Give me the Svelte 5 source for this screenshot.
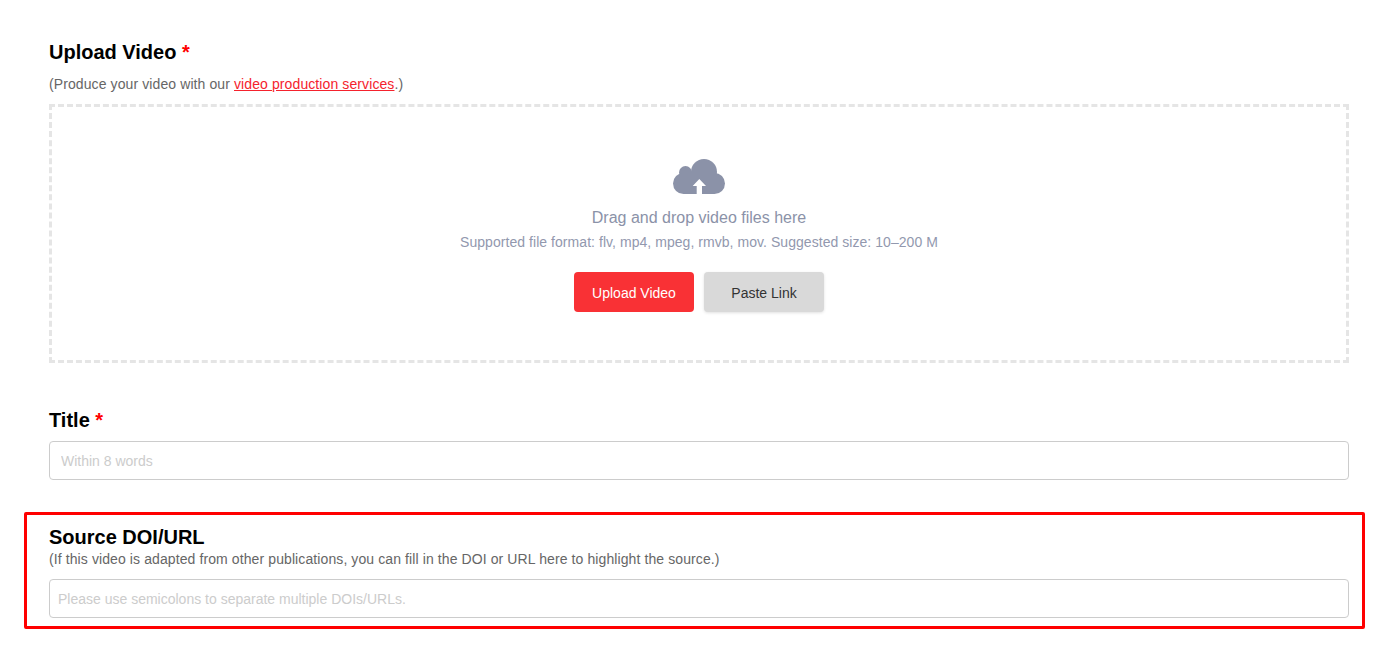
<script>
  let title = "";
  let source = "";
</script>

<div class="page">
  <section class="upload">
    <h2>Upload Video <span class="req">*</span></h2>
    <p class="hint">(Produce your video with our <a href="#services">video production services</a>.)</p>
    <div class="dropzone">
      <svg class="cloud" width="54" height="38" viewBox="0 0 54 38" aria-hidden="true">
        <g fill="#8b92a8">
          <circle cx="32" cy="13" r="13" />
          <circle cx="13.500" cy="13.500" r="6.500" />
          <circle cx="11.500" cy="24.500" r="10.500" />
          <circle cx="42.500" cy="24.500" r="10.500" />
          <rect x="11.500" y="14" width="31" height="21" />
        </g>
        <path fill="#fff" d="M27.300 20 L20.700 27 H24.700 V36 H30 V27 H34Z" />
      </svg>
      <p class="drag">Drag and drop video files here</p>
      <p class="formats">Supported file format: flv, mp4, mpeg, rmvb, mov. Suggested size: 10–200 M</p>
      <div class="actions">
        <button class="btn primary" type="button">Upload Video</button>
        <button class="btn secondary" type="button">Paste Link</button>
      </div>
    </div>
  </section>

  <section class="title-field">
    <h2>Title <span class="req">*</span></h2>
    <input class="title-input" type="text" placeholder="Within 8 words" bind:value={title} />
  </section>

  <section class="source-field">
    <h2>Source DOI/URL</h2>
    <p class="hint">(If this video is adapted from other publications, you can fill in the DOI or URL here to highlight the source.)</p>
    <input type="text" placeholder="Please use semicolons to separate multiple DOIs/URLs." bind:value={source} />
  </section>
</div>

<style>
  :global(body) {
    background: #fff;
    font-family: "Liberation Sans", Arial, sans-serif;
  }

  .page {
    width: 1300px;
    padding: 40px 47px 0 49px;
  }

  h2 {
    margin: 0;
    font-size: 20px;
    line-height: 24px;
    font-weight: 700;
    color: #000;
  }

  .req {
    color: #f00;
  }

  .hint {
    margin: 0;
    font-size: 14px;
    line-height: 20px;
    letter-spacing: 0.1px;
    color: #666;
  }

  .hint a {
    color: #f5222d;
    text-decoration: underline;
  }

  .upload .hint {
    margin-top: 10px;
  }

  .dropzone {
    box-sizing: border-box;
    height: 259px;
    margin-top: 10px;
    padding-top: 52px;
    border: 3px dashed #e5e5e5;
    display: flex;
    flex-direction: column;
    align-items: center;
  }

  .cloud {
    display: block;
  }

  .drag {
    margin: 10px 0 0;
    font-size: 16px;
    line-height: 22px;
    color: #8b92a8;
  }

  .formats {
    margin: 3px 0 0;
    font-size: 14px;
    line-height: 20px;
    letter-spacing: 0.05px;
    color: #9298ae;
  }

  .actions {
    display: flex;
    gap: 10px;
    margin-top: 20px;
  }

  .btn {
    width: 120px;
    height: 40px;
    padding: 2px 0 0;
    border: 0;
    border-radius: 4px;
    font-family: inherit;
    font-size: 14px;
    cursor: pointer;
  }

  .primary {
    background: #f93135;
    color: #fff;
  }

  .secondary {
    background: #d9d9d9;
    color: #333;
    box-shadow: 0 1px 3px rgba(0, 0, 0, 0.12);
  }

  .title-field {
    margin-top: 45px;
  }

  input {
    box-sizing: border-box;
    display: block;
    width: 100%;
    height: 39px;
    padding: 0 8px;
    border: 1px solid #ccc;
    border-radius: 4px;
    background: #fff;
    font-family: inherit;
    font-size: 14px;
    color: #333;
    outline: none;
  }

  input::placeholder {
    color: #ccc;
    opacity: 1;
  }

  .title-input {
    margin-top: 9px;
    padding: 0 11px;
  }

  .source-field {
    margin: 32px -16px 0 -25px;
    padding: 10px 13px 8px 22px;
    border: 3px solid #f00;
    border-radius: 2px;
  }

  .source-field input {
    margin-top: 10px;
  }
</style>
